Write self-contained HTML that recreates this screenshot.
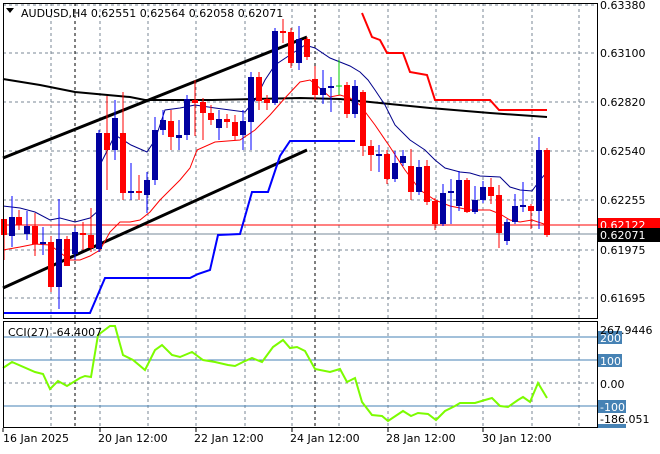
<!DOCTYPE html>
<html><head><style>
body{margin:0;background:#fff;width:660px;height:450px;overflow:hidden;font-family:"DejaVu Sans","Liberation Sans",sans-serif;}
svg text{font-family:"DejaVu Sans","Liberation Sans",sans-serif;font-size:11px;}
</style></head><body>
<svg width="660" height="450" xmlns="http://www.w3.org/2000/svg">
<rect width="660" height="450" fill="#fff"/>
<g stroke="#7a8794" stroke-dasharray="3,3" stroke-width="1">
<line x1="51" y1="3" x2="51" y2="318"/><line x1="100" y1="3" x2="100" y2="318"/><line x1="148" y1="3" x2="148" y2="318"/><line x1="196" y1="3" x2="196" y2="318"/><line x1="245" y1="3" x2="245" y2="318"/><line x1="292" y1="3" x2="292" y2="318"/><line x1="339" y1="3" x2="339" y2="318"/><line x1="388" y1="3" x2="388" y2="318"/><line x1="436" y1="3" x2="436" y2="318"/><line x1="483" y1="3" x2="483" y2="318"/><line x1="532" y1="3" x2="532" y2="318"/><line x1="579" y1="3" x2="579" y2="318"/>
<line x1="51" y1="321" x2="51" y2="427"/><line x1="100" y1="321" x2="100" y2="427"/><line x1="148" y1="321" x2="148" y2="427"/><line x1="196" y1="321" x2="196" y2="427"/><line x1="245" y1="321" x2="245" y2="427"/><line x1="292" y1="321" x2="292" y2="427"/><line x1="339" y1="321" x2="339" y2="427"/><line x1="388" y1="321" x2="388" y2="427"/><line x1="436" y1="321" x2="436" y2="427"/><line x1="483" y1="321" x2="483" y2="427"/><line x1="532" y1="321" x2="532" y2="427"/><line x1="579" y1="321" x2="579" y2="427"/>
<line x1="3" y1="5" x2="597" y2="5"/><line x1="3" y1="53" x2="597" y2="53"/><line x1="3" y1="102" x2="597" y2="102"/><line x1="3" y1="151" x2="597" y2="151"/><line x1="3" y1="200" x2="597" y2="200"/><line x1="3" y1="250" x2="597" y2="250"/><line x1="3" y1="298" x2="597" y2="298"/>
<line x1="3" y1="383" x2="597" y2="383"/>
</g>
<g stroke="#000" stroke-dasharray="3,3"><line x1="75" y1="3" x2="75" y2="318"/><line x1="315" y1="3" x2="315" y2="318"/><line x1="75" y1="321" x2="75" y2="427"/><line x1="315" y1="321" x2="315" y2="427"/></g>
<g stroke="#4682b4" stroke-width="1"><line x1="3" y1="337" x2="597" y2="337"/><line x1="3" y1="360" x2="597" y2="360"/><line x1="3" y1="406" x2="597" y2="406"/></g>
<line x1="3" y1="225" x2="597" y2="225" stroke="#f00"/>
<line x1="3" y1="234" x2="597" y2="234" stroke="#778899"/>
<polyline fill="none" stroke="#000" stroke-width="2" points="3,79 40,85 75,92 130,97 145,100 212,100 300,98 340,99 380,103 430,108 490,113 547,117"/>
<line x1="3" y1="158" x2="307" y2="37" stroke="#000" stroke-width="3"/>
<line x1="3" y1="288" x2="307" y2="150" stroke="#000" stroke-width="3"/>
<polyline fill="none" stroke="#0000ff" stroke-width="2" points="3,313 90,313 105,278 190,278 198,274 210,270 218,235 240,234 252,192 268,192 280,156 290,141 355,141"/>
<polyline fill="none" stroke="#f00" stroke-width="2" points="362,13 372,37 380,40 387,53 403,53 410,72 427,75 435,100 490,100 499,110 547,110"/>
<polyline fill="none" stroke="#00008b" stroke-width="1" points="3,206 20,208 35,212 50,220 60,218 75,222 90,218 98,211 100,165 115,135 131,145 147,152 155,140 165,110 180,108 195,105 215,108 245,112 255,100 265,80 275,65 290,55 305,45 315,48 330,58 340,62 350,66 360,72 368,80 375,90 385,105 395,125 410,140 425,150 435,160 445,168 460,172 470,173 480,176 500,177 510,187 520,190 532,191 540,180 547,172"/>
<polyline fill="none" stroke="#f00" stroke-width="1" points="3,250 20,247 35,244 50,245 70,260 80,260 90,256 100,250 110,232 120,222 130,222 140,220 150,212 160,200 170,190 180,180 190,168 197,150 215,142 240,140 255,130 270,115 285,98 300,82 310,80 315,84 330,97 340,95 350,98 360,105 375,125 390,147 405,170 420,190 435,200 450,206 460,208 470,210 490,210 500,214 510,220 520,222 532,220 547,225"/>
<g stroke="#f00">
<line x1="4" y1="219" x2="4" y2="260"/><line x1="19" y1="210" x2="19" y2="230"/><line x1="35" y1="213" x2="35" y2="256"/><line x1="51" y1="236" x2="51" y2="292"/><line x1="67" y1="236" x2="67" y2="266"/><line x1="83" y1="222" x2="83" y2="250"/><line x1="91" y1="208" x2="91" y2="252"/><line x1="107" y1="96" x2="107" y2="190"/><line x1="123" y1="92" x2="123" y2="200"/><line x1="139" y1="175" x2="139" y2="200"/><line x1="171" y1="110" x2="171" y2="150"/><line x1="195" y1="80" x2="195" y2="136"/><line x1="203" y1="98" x2="203" y2="140"/><line x1="211" y1="105" x2="211" y2="125"/><line x1="227" y1="114" x2="227" y2="128"/><line x1="235" y1="115" x2="235" y2="140"/><line x1="259" y1="72" x2="259" y2="110"/><line x1="267" y1="95" x2="267" y2="110"/><line x1="283" y1="19" x2="283" y2="43"/><line x1="291" y1="28" x2="291" y2="68"/><line x1="307" y1="37" x2="307" y2="60"/><line x1="315" y1="66" x2="315" y2="100"/><line x1="347" y1="82" x2="347" y2="118"/><line x1="363" y1="90" x2="363" y2="156"/><line x1="371" y1="140" x2="371" y2="171"/><line x1="387" y1="150" x2="387" y2="184"/><line x1="411" y1="149" x2="411" y2="200"/><line x1="427" y1="160" x2="427" y2="205"/><line x1="435" y1="198" x2="435" y2="230"/><line x1="467" y1="178" x2="467" y2="213"/><line x1="491" y1="178" x2="491" y2="204"/><line x1="499" y1="185" x2="499" y2="248"/><line x1="531" y1="204" x2="531" y2="229"/><line x1="547" y1="148" x2="547" y2="237"/>
</g>
<g fill="#f00">
<rect x="1" y="219" width="6" height="16"/><rect x="16" y="217" width="6" height="8"/><rect x="32" y="226" width="6" height="18"/><rect x="48" y="242" width="6" height="45"/><rect x="64" y="239" width="6" height="27"/><rect x="80" y="233" width="6" height="2"/><rect x="88" y="235" width="6" height="13"/><rect x="104" y="133" width="6" height="17"/><rect x="120" y="133" width="6" height="60"/><rect x="136" y="191" width="6" height="2"/><rect x="168" y="121" width="6" height="16"/><rect x="192" y="100" width="6" height="3"/><rect x="200" y="102" width="6" height="11"/><rect x="208" y="113" width="6" height="7"/><rect x="224" y="119" width="6" height="3"/><rect x="232" y="122" width="6" height="14"/><rect x="256" y="77" width="6" height="24"/><rect x="264" y="99" width="6" height="4"/><rect x="280" y="31" width="6" height="2"/><rect x="288" y="32" width="6" height="31"/><rect x="304" y="39" width="6" height="18"/><rect x="312" y="79" width="6" height="16"/><rect x="344" y="85" width="6" height="29"/><rect x="360" y="92" width="6" height="54"/><rect x="368" y="146" width="6" height="9"/><rect x="384" y="154" width="6" height="25"/><rect x="408" y="166" width="6" height="26"/><rect x="424" y="166" width="6" height="36"/><rect x="432" y="201" width="6" height="23"/><rect x="464" y="180" width="6" height="32"/><rect x="488" y="187" width="6" height="9"/><rect x="496" y="195" width="6" height="38"/><rect x="528" y="206" width="6" height="5"/><rect x="544" y="150" width="6" height="85"/>
</g>
<g stroke="#0000ff">
<line x1="12" y1="196" x2="12" y2="247"/><line x1="27" y1="211" x2="27" y2="240"/><line x1="43" y1="227" x2="43" y2="255"/><line x1="59" y1="199" x2="59" y2="309"/><line x1="75" y1="228" x2="75" y2="260"/><line x1="99" y1="130" x2="99" y2="252"/><line x1="115" y1="100" x2="115" y2="160"/><line x1="131" y1="163" x2="131" y2="200"/><line x1="147" y1="172" x2="147" y2="213"/><line x1="155" y1="117" x2="155" y2="185"/><line x1="163" y1="110" x2="163" y2="135"/><line x1="179" y1="120" x2="179" y2="150"/><line x1="187" y1="95" x2="187" y2="140"/><line x1="219" y1="110" x2="219" y2="140"/><line x1="243" y1="110" x2="243" y2="150"/><line x1="251" y1="72" x2="251" y2="150"/><line x1="275" y1="28" x2="275" y2="105"/><line x1="299" y1="26" x2="299" y2="70"/><line x1="323" y1="70" x2="323" y2="104"/><line x1="331" y1="77" x2="331" y2="112"/><line x1="355" y1="80" x2="355" y2="118"/><line x1="379" y1="145" x2="379" y2="172"/><line x1="395" y1="151" x2="395" y2="182"/><line x1="403" y1="150" x2="403" y2="166"/><line x1="419" y1="160" x2="419" y2="195"/><line x1="443" y1="184" x2="443" y2="226"/><line x1="451" y1="179" x2="451" y2="224"/><line x1="459" y1="171" x2="459" y2="211"/><line x1="475" y1="186" x2="475" y2="214"/><line x1="483" y1="181" x2="483" y2="203"/><line x1="507" y1="219" x2="507" y2="245"/><line x1="515" y1="194" x2="515" y2="224"/><line x1="523" y1="182" x2="523" y2="212"/><line x1="539" y1="137" x2="539" y2="229"/>
</g>
<g fill="#0000a0">
<rect x="9" y="217" width="6" height="19"/><rect x="24" y="226" width="6" height="8"/><rect x="40" y="242" width="6" height="2"/><rect x="56" y="239" width="6" height="48"/><rect x="72" y="232" width="6" height="22"/><rect x="96" y="133" width="6" height="116"/><rect x="112" y="118" width="6" height="32"/><rect x="128" y="191" width="6" height="2"/><rect x="144" y="180" width="6" height="15"/><rect x="152" y="130" width="6" height="50"/><rect x="160" y="120" width="6" height="10"/><rect x="176" y="135" width="6" height="3"/><rect x="184" y="99" width="6" height="36"/><rect x="216" y="119" width="6" height="9"/><rect x="240" y="121" width="6" height="14"/><rect x="248" y="77" width="6" height="45"/><rect x="272" y="31" width="6" height="72"/><rect x="296" y="39" width="6" height="24"/><rect x="320" y="88" width="6" height="7"/><rect x="328" y="86" width="6" height="2"/><rect x="352" y="86" width="6" height="28"/><rect x="376" y="154" width="6" height="2"/><rect x="392" y="163" width="6" height="16"/><rect x="400" y="156" width="6" height="7"/><rect x="416" y="167" width="6" height="25"/><rect x="440" y="193" width="6" height="31"/><rect x="448" y="191" width="6" height="2"/><rect x="456" y="180" width="6" height="26"/><rect x="472" y="200" width="6" height="12"/><rect x="480" y="187" width="6" height="13"/><rect x="504" y="222" width="6" height="19"/><rect x="512" y="206" width="6" height="16"/><rect x="520" y="205" width="6" height="2"/><rect x="536" y="150" width="6" height="61"/>
</g>
<line x1="339" y1="60" x2="339" y2="95" stroke="#0c0"/><line x1="336" y1="86" x2="342" y2="86" stroke="#0c0"/>
<polyline fill="none" stroke="#7cfc00" stroke-width="2" points="3,368 12,362 35,372 43,374 50,389 58,381 67,386 80,378 85,376 91,377 98,335 110,326 115,326 123,355 133,360 145,370 155,350 162,345 172,355 180,357 192,352 203,360 215,362 228,365 235,366 243,362 252,358 262,362 273,347 283,340 290,348 297,347 305,351 315,369 330,372 340,369 347,382 355,378 362,402 372,415 382,416 388,421 403,411 411,416 418,413 428,414 436,420 445,411 455,406 460,403 475,403 485,400 492,398 500,406 508,407 518,400 523,397 530,402 538,383 547,398"/>
<rect x="3.5" y="3.5" width="594" height="315" fill="none" stroke="#000"/>
<rect x="3.5" y="321.5" width="594" height="106" fill="none" stroke="#000"/>
<path d="M6 8 L14 8 L10 13Z" fill="#000"/>
<text x="21" y="17" fill="#000">AUDUSD,H4  0.62551 0.62564 0.62058 0.62071</text>
<text x="8" y="336" fill="#000">CCI(27) -64.4007</text>
<g fill="#000">
<text x="600" y="9">0.63380</text><text x="600" y="57">0.63100</text><text x="600" y="106">0.62820</text><text x="600" y="155">0.62540</text><text x="600" y="204">0.62255</text><text x="600" y="254">0.61975</text><text x="600" y="302">0.61695</text>
</g>
<rect x="598" y="218" width="62" height="13" fill="#f00"/><text x="600" y="229" fill="#fff">0.62122</text>
<rect x="598" y="228" width="62" height="14" fill="#000"/><text x="600" y="239" fill="#fff">0.62071</text>
<rect x="598" y="331" width="24" height="13" fill="#4682b4"/><text x="600" y="342" fill="#fff">200</text>
<text x="600" y="334" fill="#000">267.9446</text>
<rect x="598" y="354" width="24" height="13" fill="#4682b4"/><text x="600" y="365" fill="#fff">100</text>
<text x="600" y="388" fill="#000">0.00</text>
<rect x="598" y="400" width="28" height="13" fill="#4682b4"/><text x="600" y="411" fill="#fff">-100</text>
<rect x="598" y="424" width="28" height="4" fill="#4682b4"/>
<text x="600" y="423" fill="#000">-186.051</text>
<g fill="#000"><text x="3" y="442">16 Jan 2025</text><text x="98" y="442">20 Jan 12:00</text><text x="194" y="442">22 Jan 12:00</text><text x="290" y="442">24 Jan 12:00</text><text x="386" y="442">28 Jan 12:00</text><text x="482" y="442">30 Jan 12:00</text></g>
<g stroke="#000"><line x1="3" y1="428" x2="3" y2="432"/><line x1="100" y1="428" x2="100" y2="432"/><line x1="196" y1="428" x2="196" y2="432"/><line x1="292" y1="428" x2="292" y2="432"/><line x1="388" y1="428" x2="388" y2="432"/><line x1="483" y1="428" x2="483" y2="432"/></g>
</svg>
</body></html>
